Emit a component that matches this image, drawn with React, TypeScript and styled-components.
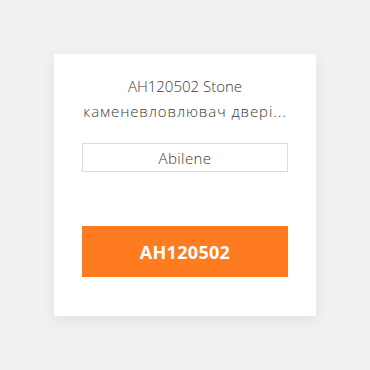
import React from "react";
import styled, { createGlobalStyle } from "styled-components";

const Global = createGlobalStyle`
  html, body { margin: 0; padding: 0; background: #f1f1f1; }
  body { font-family: "Open Sans", "Liberation Sans", sans-serif; }
`;

const Page = styled.div`
  width: 370px;
  height: 370px;
  display: flex;
  align-items: flex-start;
  justify-content: center;
  padding-top: 54px;
  box-sizing: border-box;
`;

const Card = styled.div`
  width: 262px;
  height: 262px;
  background: #ffffff;
  box-shadow: 0 4px 14px rgba(0, 0, 0, 0.07);
  box-sizing: border-box;
  padding: 20px 28px 0;
  display: flex;
  flex-direction: column;
`;

const Title = styled.div`
  font-size: 15px;
  font-weight: 300;
  line-height: 25px;
  color: #3a3a3a;
  text-align: center;
  height: 50px;
  white-space: nowrap;
  display: flex;
  flex-direction: column;
  align-items: center;
`;

const Line = styled.span<{ $spacing: number }>`
  letter-spacing: ${(p) => p.$spacing}px;
`;

const Field = styled.div`
  margin-top: 19px;
  height: 29px;
  border: 1px solid #dcdcdc;
  box-sizing: border-box;
  display: flex;
  align-items: center;
  justify-content: center;
  font-size: 15px;
  font-weight: 300;
  color: #3a3a3a;
  letter-spacing: 0.4px;
`;

const Button = styled.button`
  margin-top: 54px;
  height: 51px;
  border: none;
  background: #ff7b20;
  color: #fff;
  font-family: "Open Sans", "Liberation Sans", sans-serif;
  font-weight: 700;
  font-size: 18px;
  letter-spacing: 0.3px;
  cursor: pointer;
  padding: 0;
`;

export default function App() {
  return (
    <>
      <Global />
      <Page>
        <Card>
          <Title>
            <Line $spacing={0}>AH120502 Stone</Line>
            <Line $spacing={0.9}>каменевловлювач двері...</Line>
          </Title>
          <Field>Abilene</Field>
          <Button>AH120502</Button>
        </Card>
      </Page>
    </>
  );
}
